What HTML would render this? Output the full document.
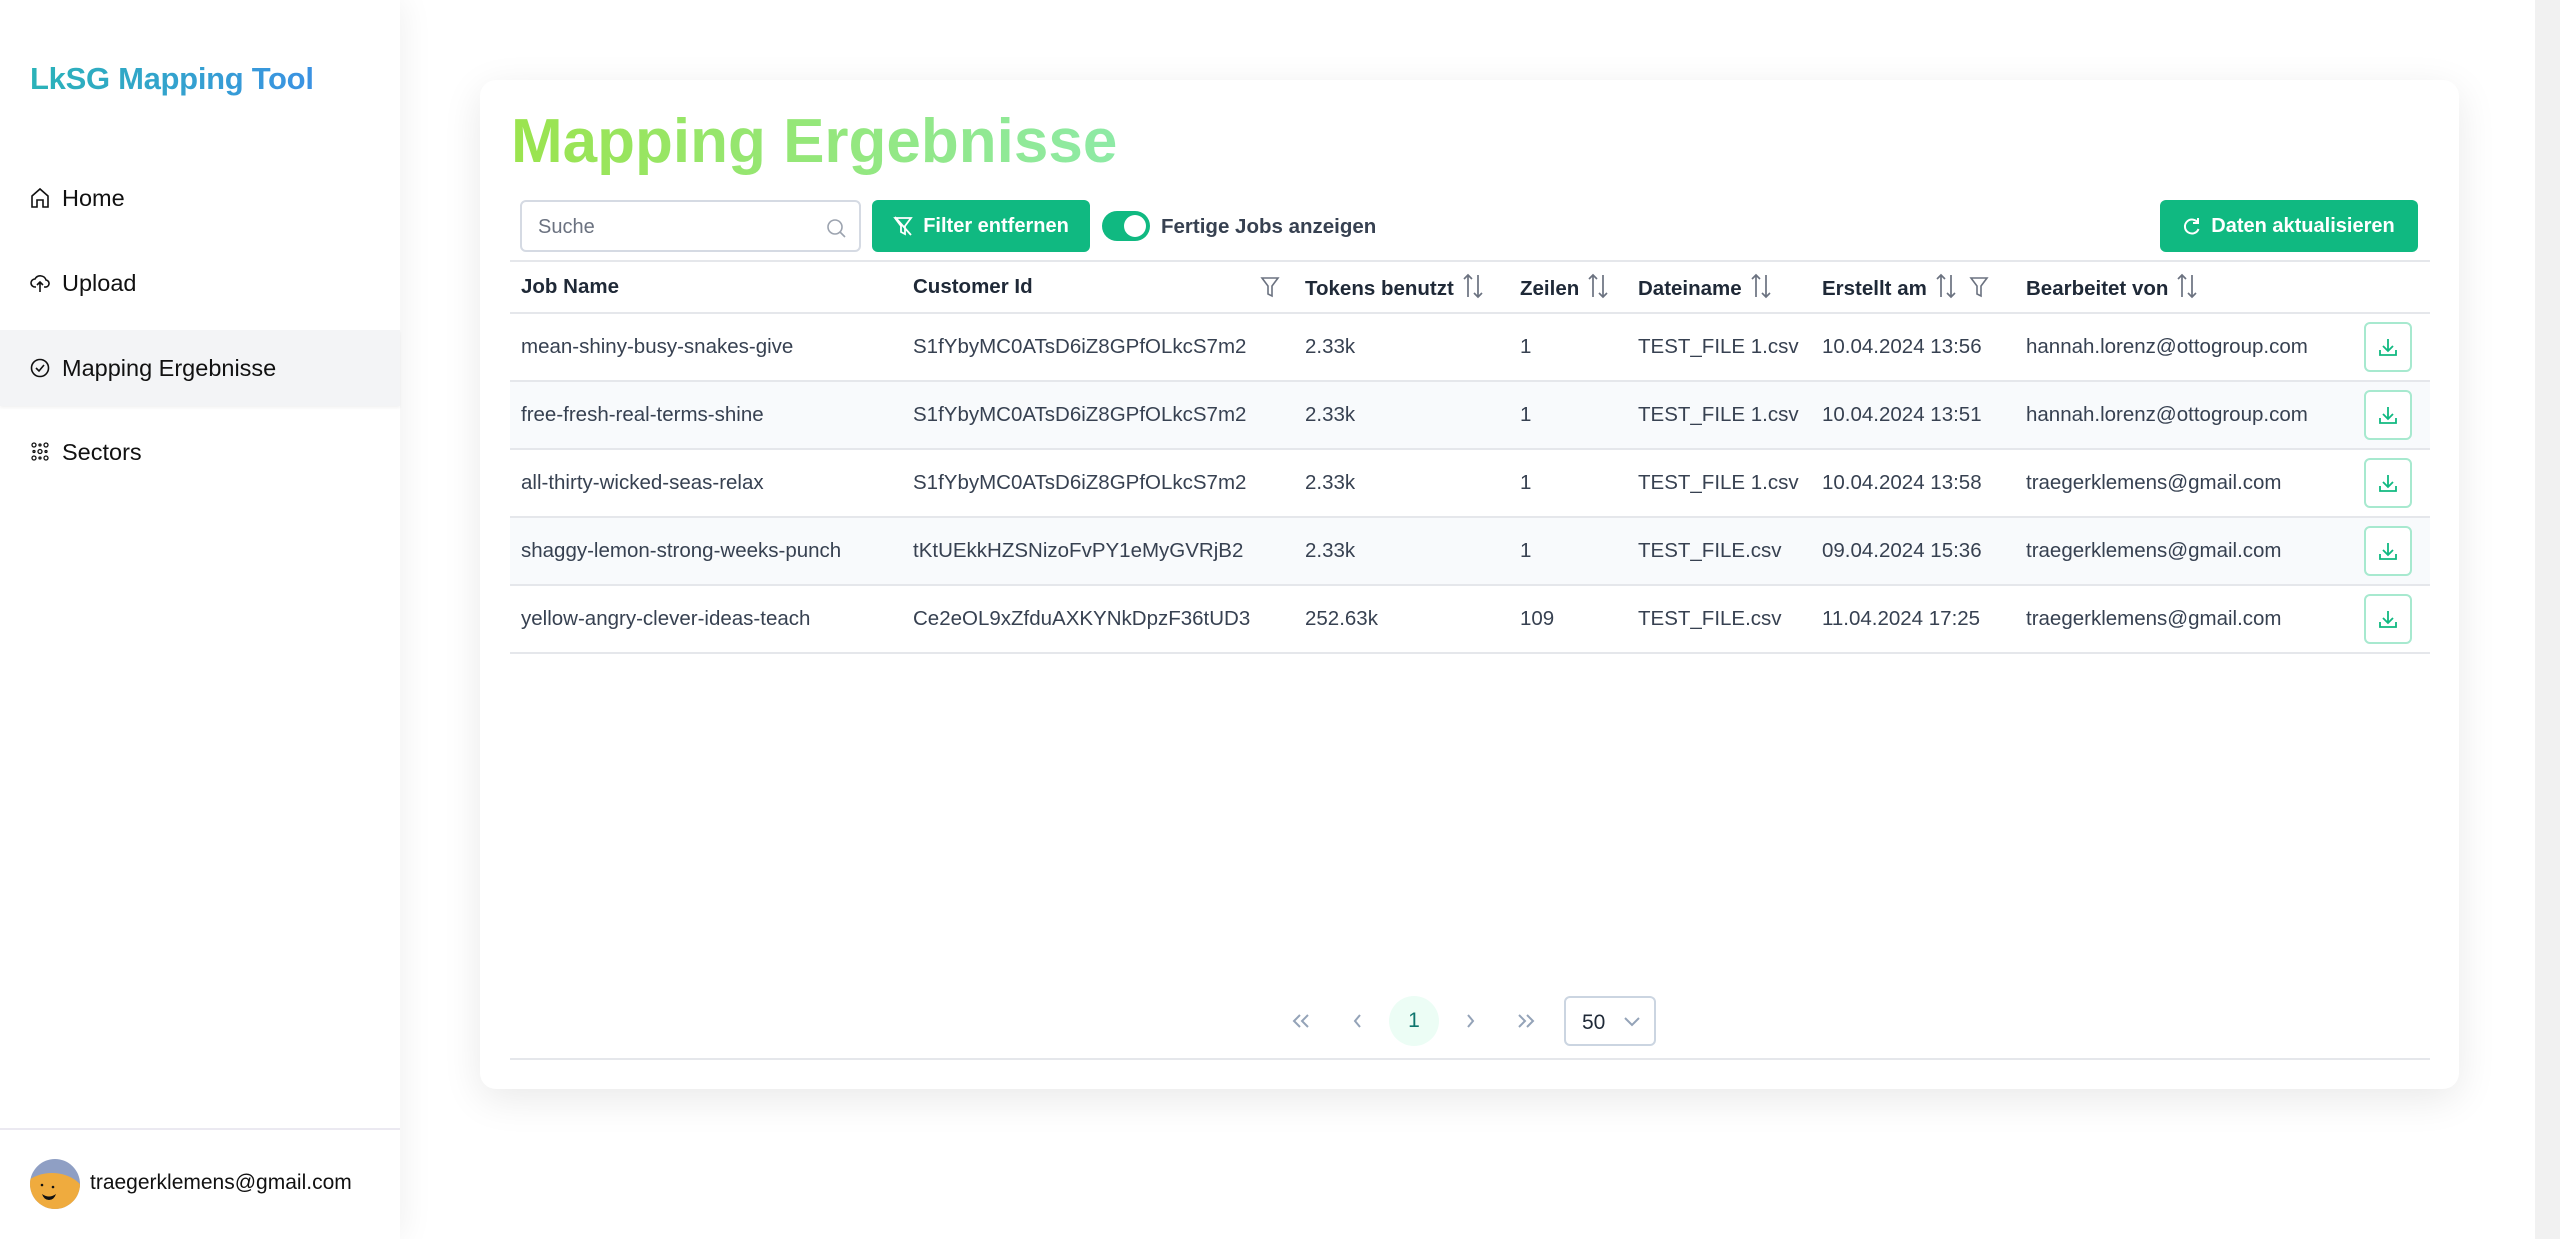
<!DOCTYPE html>
<html><head><meta charset="utf-8"><style>
*{box-sizing:border-box;margin:0;padding:0}
body{width:2560px;height:1239px;overflow:hidden;background:#fff;font-family:"Liberation Sans",sans-serif;color:#374151;position:relative}
.side{position:absolute;left:0;top:0;width:400px;height:1239px;background:#fff;box-shadow:4px 0 30px rgba(0,0,0,.06);z-index:2}
.logo{position:absolute;left:30px;top:61px;font-size:31px;font-weight:bold;background:linear-gradient(90deg,#2bb3b8,#3b92e3);-webkit-background-clip:text;color:transparent;letter-spacing:-0.3px}
.nav{position:absolute;left:0;width:400px;height:76px;display:flex;align-items:center;padding-left:30px;font-size:23.5px;color:#111}
.nav svg{margin-right:12px}
.nav.active{background:#f3f4f6;box-shadow:0 2px 3px rgba(0,0,0,.05)}
.foot{position:absolute;left:0;top:1128px;width:400px;border-top:2px solid #ebe9f1}
.scroll{position:absolute;right:0;top:0;width:25px;height:1239px;background:#f1f1f1}
.card{position:absolute;left:480px;top:80px;width:1979px;height:1009px;background:#fff;border-radius:16px;box-shadow:0 10px 40px rgba(0,0,0,.09)}
h1{position:absolute;left:31px;top:26px;font-size:62px;font-weight:bold;background:linear-gradient(90deg,#9be44e,#8eeaa6);-webkit-background-clip:text;color:transparent;letter-spacing:0}
.search{position:absolute;left:40px;top:120px;width:341px;height:52px;border:2px solid #d5dae3;border-radius:6px;font-size:20px;color:#6b7280;padding:14px 16px}
.btn{position:absolute;top:120px;height:52px;background:#10b981;color:#fff;border-radius:6px;font-size:20px;font-weight:bold;display:flex;align-items:center;justify-content:center;gap:10px}
.tog{position:absolute;left:622px;top:131px;width:48px;height:30px;border-radius:15px;background:#10b981}
.tog:after{content:"";position:absolute;right:4px;top:4px;width:22px;height:22px;border-radius:50%;background:#fff}
.tl{position:absolute;left:681px;top:135px;font-size:20.5px;font-weight:bold;color:#374151}
table{position:absolute;left:30px;top:180px;width:1920px;border-collapse:collapse;font-size:20.5px}
th{text-align:left;font-weight:bold;height:52px;border-top:2px solid #e5e7eb;border-bottom:2px solid #e5e7eb;padding-left:11px;white-space:nowrap;color:#1f2937}
td{height:68px;border-bottom:2px solid #e5e7eb;padding-left:11px;white-space:nowrap;color:#374151}
tr.s td{background:#f8fafc}
.si{margin-left:8px;vertical-align:-4px}
.dl{width:48px;height:50px;border:2px solid #a7e9cf;border-radius:6px;display:flex;align-items:center;justify-content:center;background:#fff}
.pg{position:absolute;top:916px;height:50px;width:30px;display:flex;align-items:center;justify-content:center}
</style></head><body>
<div class="side">
<div class="logo">LkSG Mapping Tool</div>
<div class="nav" style="top:160px"><svg width="20" height="22" viewBox="0 0 20 22" fill="none" stroke="#111" stroke-width="1.6"><path d="M2 9L10 2l8 7v11h-5v-7H7v7H2z"/></svg>Home</div>
<div class="nav" style="top:245px"><svg width="20" height="22" viewBox="0 0 20 22" fill="none" stroke="#111" stroke-width="1.6"><path d="M6 15H5a4 4 0 010-8 6 6 0 0111 1 3.5 3.5 0 01-1 7h-1M10 20v-9M7 13l3-3 3 3"/></svg>Upload</div>
<div class="nav active" style="top:330px"><svg width="20" height="22" viewBox="0 0 20 22" fill="none" stroke="#111" stroke-width="1.6"><circle cx="10" cy="11" r="8.5"/><path d="M6 11l3 3 5-6"/></svg>Mapping Ergebnisse</div>
<div class="nav" style="top:414px"><svg width="20" height="22" viewBox="0 0 20 22" fill="none" stroke="#111" stroke-width="1.3"><circle cx="4" cy="4" r="2"/><circle cx="16" cy="4" r="2"/><circle cx="10" cy="10.5" r="2"/><circle cx="4" cy="17" r="2"/><circle cx="16" cy="17" r="2"/><circle cx="10" cy="4" r="1"/><circle cx="4" cy="10.5" r="1"/><circle cx="16" cy="10.5" r="1"/><circle cx="10" cy="17" r="1"/></svg>Sectors</div>
<div class="foot"></div>
<svg style="position:absolute;left:30px;top:1159px" width="50" height="50" viewBox="0 0 50 50"><clipPath id="c"><circle cx="25" cy="25" r="25"/></clipPath><g clip-path="url(#c)"><rect width="50" height="50" fill="#8f9fc4"/><ellipse cx="22" cy="40" rx="34" ry="26" fill="#efab3e"/><path d="M12 35q7 5 14 0q-2 6-7 6t-7-6z" fill="#111"/><circle cx="12" cy="26" r="1.3" fill="#111"/><circle cx="23" cy="28" r="1.3" fill="#111"/></g></svg>
<div style="position:absolute;left:90px;top:1171px;font-size:21px;color:#111">traegerklemens@gmail.com</div>
</div>
<div class="scroll"></div>
<div class="card">
<h1>Mapping Ergebnisse</h1>
<div class="search">Suche<svg style="position:absolute;right:12px;top:15px" width="22" height="22" viewBox="0 0 22 22" fill="none" stroke="#9ca3af" stroke-width="1.6"><circle cx="10" cy="10" r="7"/><path d="M15 15l5 5"/></svg></div>
<div class="btn" style="left:392px;width:218px"><svg width="20" height="22" viewBox="0 0 20 22" fill="none" stroke="#fff" stroke-width="1.8"><path d="M2 3h16l-6 8v8l-4-2v-6zM2 2l16 18"/></svg>Filter entfernen</div>
<div class="tog"></div>
<div class="tl">Fertige Jobs anzeigen</div>
<div class="btn" style="left:1680px;width:258px"><svg width="18" height="22" viewBox="0 0 18 22" fill="none" stroke="#fff" stroke-width="2"><path d="M15 8a7 7 0 10.5 6M15 3v5h-5"/></svg>Daten aktualisieren</div>
<table>
<tr><th style="width:392px">Job Name</th><th style="width:392px">Customer Id<svg style="float:right;margin-right:14px" width="20" height="24" viewBox="0 0 20 24" fill="none" stroke="#6b7280" stroke-width="1.6"><path d="M2 3h16l-6 8v10l-4-2v-8z"/></svg></th><th style="width:215px">Tokens benutzt<svg class="si" width="22" height="26" viewBox="0 0 22 26" fill="none" stroke="#6b7280" stroke-width="1.7"><path d="M6 24V2M2 6l4-4 4 4M16 2v22M12 20l4 4 4-4"/></svg></th><th style="width:118px">Zeilen<svg class="si" width="22" height="26" viewBox="0 0 22 26" fill="none" stroke="#6b7280" stroke-width="1.7"><path d="M6 24V2M2 6l4-4 4 4M16 2v22M12 20l4 4 4-4"/></svg></th><th style="width:184px">Dateiname<svg class="si" width="22" height="26" viewBox="0 0 22 26" fill="none" stroke="#6b7280" stroke-width="1.7"><path d="M6 24V2M2 6l4-4 4 4M16 2v22M12 20l4 4 4-4"/></svg></th><th style="width:204px">Erstellt am<svg class="si" width="22" height="26" viewBox="0 0 22 26" fill="none" stroke="#6b7280" stroke-width="1.7"><path d="M6 24V2M2 6l4-4 4 4M16 2v22M12 20l4 4 4-4"/></svg><svg style="margin-left:12px;vertical-align:-4px" width="20" height="24" viewBox="0 0 20 24" fill="none" stroke="#6b7280" stroke-width="1.6"><path d="M2 3h16l-6 8v10l-4-2v-8z"/></svg></th><th style="width:338px">Bearbeitet von<svg class="si" width="22" height="26" viewBox="0 0 22 26" fill="none" stroke="#6b7280" stroke-width="1.7"><path d="M6 24V2M2 6l4-4 4 4M16 2v22M12 20l4 4 4-4"/></svg></th><th></th></tr>
<tr><td>mean-shiny-busy-snakes-give</td><td>S1fYbyMC0ATsD6iZ8GPfOLkcS7m2</td><td>2.33k</td><td>1</td><td>TEST_FILE 1.csv</td><td>10.04.2024 13:56</td><td>hannah.lorenz@ottogroup.com</td><td><div class="dl"><svg width="22" height="22" viewBox="0 0 22 22" fill="none" stroke="#10b981" stroke-width="1.8"><path d="M11 3v11M6 10l5 5 5-5M3 14v5h16v-5"/></svg></div></td></tr>
<tr class="s"><td>free-fresh-real-terms-shine</td><td>S1fYbyMC0ATsD6iZ8GPfOLkcS7m2</td><td>2.33k</td><td>1</td><td>TEST_FILE 1.csv</td><td>10.04.2024 13:51</td><td>hannah.lorenz@ottogroup.com</td><td><div class="dl"><svg width="22" height="22" viewBox="0 0 22 22" fill="none" stroke="#10b981" stroke-width="1.8"><path d="M11 3v11M6 10l5 5 5-5M3 14v5h16v-5"/></svg></div></td></tr>
<tr><td>all-thirty-wicked-seas-relax</td><td>S1fYbyMC0ATsD6iZ8GPfOLkcS7m2</td><td>2.33k</td><td>1</td><td>TEST_FILE 1.csv</td><td>10.04.2024 13:58</td><td>traegerklemens@gmail.com</td><td><div class="dl"><svg width="22" height="22" viewBox="0 0 22 22" fill="none" stroke="#10b981" stroke-width="1.8"><path d="M11 3v11M6 10l5 5 5-5M3 14v5h16v-5"/></svg></div></td></tr>
<tr class="s"><td>shaggy-lemon-strong-weeks-punch</td><td>tKtUEkkHZSNizoFvPY1eMyGVRjB2</td><td>2.33k</td><td>1</td><td>TEST_FILE.csv</td><td>09.04.2024 15:36</td><td>traegerklemens@gmail.com</td><td><div class="dl"><svg width="22" height="22" viewBox="0 0 22 22" fill="none" stroke="#10b981" stroke-width="1.8"><path d="M11 3v11M6 10l5 5 5-5M3 14v5h16v-5"/></svg></div></td></tr>
<tr><td>yellow-angry-clever-ideas-teach</td><td>Ce2eOL9xZfduAXKYNkDpzF36tUD3</td><td>252.63k</td><td>109</td><td>TEST_FILE.csv</td><td>11.04.2024 17:25</td><td>traegerklemens@gmail.com</td><td><div class="dl"><svg width="22" height="22" viewBox="0 0 22 22" fill="none" stroke="#10b981" stroke-width="1.8"><path d="M11 3v11M6 10l5 5 5-5M3 14v5h16v-5"/></svg></div></td></tr>
</table>
<div class="pg" style="left:806px"><svg width="20" height="16" viewBox="0 0 20 16" fill="none" stroke="#94a3b8" stroke-width="2"><path d="M9 2L3 8l6 6M17 2l-6 6 6 6"/></svg></div>
<div class="pg" style="left:863px"><svg width="12" height="16" viewBox="0 0 12 16" fill="none" stroke="#94a3b8" stroke-width="2"><path d="M8 2L3 8l5 6"/></svg></div>
<div style="position:absolute;left:909px;top:916px;width:50px;height:50px;border-radius:50%;background:#ecfdf5;color:#0f766e;font-size:21px;display:flex;align-items:center;justify-content:center">1</div>
<div class="pg" style="left:975px"><svg width="12" height="16" viewBox="0 0 12 16" fill="none" stroke="#94a3b8" stroke-width="2"><path d="M4 2l5 6-5 6"/></svg></div>
<div class="pg" style="left:1031px"><svg width="20" height="16" viewBox="0 0 20 16" fill="none" stroke="#94a3b8" stroke-width="2"><path d="M3 2l6 6-6 6M11 2l6 6-6 6"/></svg></div>
<div style="position:absolute;left:1084px;top:916px;width:92px;height:50px;border:2px solid #cbd5e1;border-radius:6px;font-size:21px;color:#1f2937;padding:13px 0 0 16px">50<svg style="position:absolute;right:12px;top:17px" width="20" height="14" viewBox="0 0 20 14" fill="none" stroke="#94a3b8" stroke-width="2"><path d="M3 3l7 7 7-7"/></svg></div>
<div style="position:absolute;left:30px;top:978px;width:1920px;border-top:2px solid #e5e7eb"></div>
</div>
</body></html>
